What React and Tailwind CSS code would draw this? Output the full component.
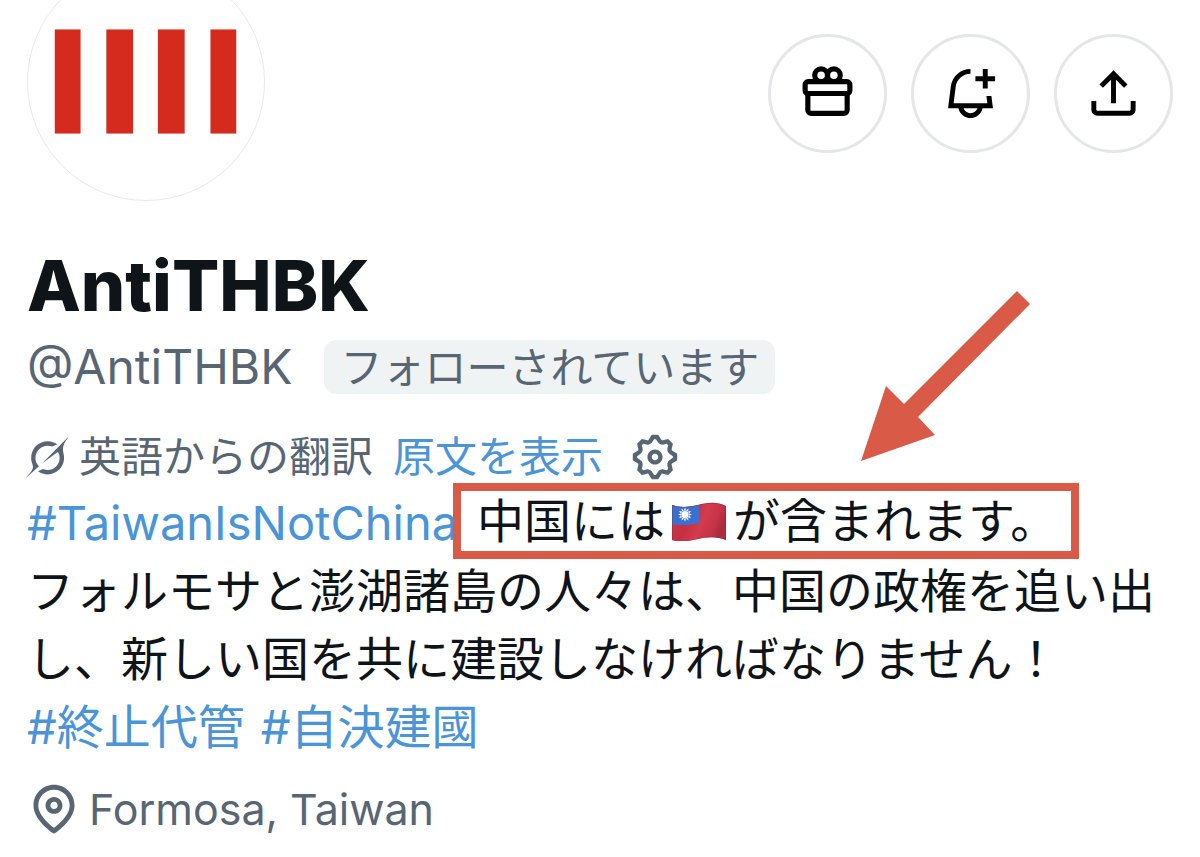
import React from 'react'

const actions = [
  { label: 'ギフト', Icon: GiftIcon },
  { label: '通知', Icon: BellPlusIcon },
  { label: '共有', Icon: ShareIcon },
]

function GiftIcon() {
  return (
    <svg viewBox="0 0 24 24" className="size-[59px]" fill="none" stroke="currentColor" strokeWidth="2.1" aria-hidden="true">
      <circle cx="9.4" cy="4.6" r="2.6" />
      <circle cx="14.6" cy="4.6" r="2.6" />
      <rect x="2.9" y="7.2" width="18.2" height="4.8" rx="1.2" fill="white" />
      <path d="M4 12v6.7c0 .8.6 1.4 1.4 1.4h13.2c.8 0 1.4-.6 1.4-1.4V12" />
    </svg>
  )
}

function BellPlusIcon() {
  return (
    <svg viewBox="0 0 24 24" className="size-[59px]" fill="currentColor" aria-hidden="true">
      <path d="M22 5v2h-3v3h-2V7h-3V5h3V2h2v3h3zm-.86 13h-4.241c-.464 2.281-2.482 4-4.899 4s-4.435-1.719-4.899-4H2.87L4 9.05C4.51 5.02 7.93 2 12 2v2C8.94 4 6.36 6.27 5.98 9.3L5.13 16h13.73l-.38-3h2.02l.64 5zM14.829 18H9.171c.413 1.164 1.524 2 2.829 2s2.416-.836 2.829-2z" />
    </svg>
  )
}

function ShareIcon() {
  return (
    <svg viewBox="0 0 24 24" className="size-[59px]" fill="currentColor" aria-hidden="true">
      <path d="M12 2.59l5.7 5.7-1.41 1.42L13 6.41V16h-2V6.41l-3.3 3.3-1.41-1.42L12 2.59zM21 15l-.02 3.51c0 1.38-1.12 2.49-2.5 2.49H5.5C4.11 21 3 19.88 3 18.5V15h2v3.5c0 .28.22.5.5.5h12.98c.28 0 .5-.22.5-.5L19 15h2z" />
    </svg>
  )
}

function GrokIcon() {
  return (
    <svg viewBox="0 0 33 32" className="-ml-0.5 h-[43px] w-11 shrink-0" fill="currentColor" aria-hidden="true">
      <path d="M12.745 20.54l10.97-8.19c.539-.4 1.307-.244 1.564.38 1.349 3.288.746 7.241-1.938 9.955-2.683 2.714-6.417 3.31-9.83 1.954l-3.728 1.745c5.347 3.697 11.84 2.782 15.898-1.324 3.219-3.255 4.216-7.692 3.284-11.693l.008.009c-1.351-5.878.332-8.227 3.782-13.031L33 0l-4.54 4.59v-.014L12.743 20.544m-2.263 1.987c-3.837-3.707-3.175-9.446.1-12.755 2.42-2.449 6.388-3.448 9.852-1.979l3.72-1.737c-.67-.49-1.53-1.017-2.515-1.387-4.455-1.854-9.789-.931-13.41 2.728-3.483 3.523-4.579 8.94-2.697 13.561 1.405 3.454-.899 5.898-3.22 8.364C1.49 30.2.666 31.074 0 32l10.478-9.466" />
    </svg>
  )
}

function GearIcon() {
  return (
    <svg viewBox="0 0 24 24" className="size-[52px]" fill="currentColor" aria-hidden="true">
      <path d="M10.54 1.75h2.92l1.57 2.36c.11.17.32.25.53.21l2.53-.59 2.17 2.17-.58 2.54c-.05.2.04.41.21.53l2.36 1.57v2.92l-2.36 1.57c-.17.12-.26.33-.21.53l.58 2.54-2.17 2.17-2.53-.59c-.21-.04-.42.04-.53.21l-1.57 2.36h-2.92l-1.58-2.36c-.11-.17-.32-.25-.52-.21l-2.54.59-2.17-2.17.58-2.54c.05-.2-.03-.41-.21-.53l-2.35-1.57v-2.92L4.1 8.97c.18-.12.26-.33.21-.53L3.73 5.9 5.9 3.73l2.54.59c.2.04.41-.04.52-.21l1.58-2.36zm1.07 2l-.98 1.47C10.05 6.08 9 6.5 7.99 6.27l-1.46-.34-.6.6.33 1.46c.24 1.01-.18 2.07-1.05 2.64l-1.46.98v.78l1.46.98c.87.57 1.29 1.63 1.05 2.64l-.33 1.46.6.6 1.46-.34c1.01-.23 2.06.19 2.64 1.05l.98 1.47h.78l.97-1.47c.58-.86 1.63-1.28 2.65-1.05l1.45.34.61-.6-.34-1.46c-.23-1.01.18-2.07 1.05-2.64l1.47-.98v-.78l-1.47-.98c-.87-.57-1.28-1.63-1.05-2.64l.34-1.46-.61-.6-1.45.34c-1.02.23-2.07-.19-2.65-1.05l-.97-1.47h-.78zM12 10.5c-.83 0-1.5.67-1.5 1.5s.67 1.5 1.5 1.5c.82 0 1.5-.67 1.5-1.5s-.68-1.5-1.5-1.5zM8.5 12c0-1.93 1.56-3.5 3.5-3.5 1.93 0 3.5 1.57 3.5 3.5s-1.57 3.5-3.5 3.5c-1.94 0-3.5-1.57-3.5-3.5z" />
    </svg>
  )
}

function PinIcon() {
  return (
    <svg viewBox="0 0 24 24" className="-ml-0.5 size-[58px] shrink-0" fill="currentColor" aria-hidden="true">
      <path d="M12 7c-1.93 0-3.5 1.57-3.5 3.5S10.07 14 12 14s3.5-1.57 3.5-3.5S13.93 7 12 7zm0 5c-.827 0-1.5-.673-1.5-1.5S11.173 9 12 9s1.5.673 1.5 1.5S12.827 12 12 12zm0-10c-4.687 0-8.5 3.813-8.5 8.5 0 5.967 7.621 11.116 7.945 11.332l.555.37.555-.37c.324-.216 7.945-5.365 7.945-11.332C20.5 5.813 16.687 2 12 2zm0 17.77c-1.665-1.241-6.5-5.196-6.5-9.27C5.5 6.916 8.416 4 12 4s6.5 2.916 6.5 6.5c0 4.073-4.835 8.028-6.5 9.27z" />
    </svg>
  )
}

function Avatar() {
  return (
    <svg viewBox="0 0 238 238" className="-mt-[37px] size-[238px] shrink-0 rounded-full border border-[#e8eaeb] bg-white" role="img" aria-label="AntiTHBK">
      <g fill="#d52b1e">
        <rect x="27" y="66" width="26" height="105" />
        <rect x="79" y="66" width="27" height="105" />
        <rect x="131" y="66" width="27" height="105" />
        <rect x="184" y="66" width="26" height="105" />
      </g>
    </svg>
  )
}

const sunRays = [0, 30, 60, 90, 120, 150, 180, 210, 240, 270, 300, 330]

function Flag() {
  return (
    <svg viewBox="0 0 56 40" className="mx-1.5 h-10 w-14" role="img" aria-label="台湾の旗">
      <defs>
        <linearGradient id="cloth" x1="0" x2="1" y1="0" y2="0.3">
          <stop offset="0" stopColor="#cb3e50" />
          <stop offset="0.4" stopColor="#c62f43" />
          <stop offset="0.65" stopColor="#d23c4e" />
          <stop offset="0.88" stopColor="#c63247" />
          <stop offset="1" stopColor="#ab2e40" />
        </linearGradient>
        <clipPath id="wave">
          <path d="M1 4c8 3 18 2 26 0s18-4 28 1v34c-10-4-19-3-28-1s-17 4-26 1z" />
        </clipPath>
      </defs>
      <g clipPath="url(#wave)">
        <rect width="56" height="40" fill="url(#cloth)" />
        <path d="M0 0h28v22c-9 2-18 3-28 1z" fill="#3a70d0" />
        <g fill="white">
          {sunRays.map((deg) => (
            <path key={deg} d="M12.9 9.5L14 6.5l1.1 3z" transform={`rotate(${deg} 14 13.5)`} />
          ))}
          <circle cx="14" cy="13.5" r="3.6" />
        </g>
        <path d="M1 4c8 3 18 2 26 0s18-4 28 1v34c-10-4-19-3-28-1s-17 4-26 1z" fill="none" stroke="#7c2236" strokeOpacity="0.6" />
      </g>
    </svg>
  )
}

function Arrow() {
  return (
    <svg viewBox="0 0 170 170" className="pointer-events-none absolute right-[40px] bottom-[90px] size-[170px]" fill="#d95a46" aria-hidden="true">
      <path d="M156 0L169 13 57 126 74 144 0 170 25 95 43 113z" />
    </svg>
  )
}

const App = () => {
  return (
    <main lang="ja" className="min-h-screen overflow-hidden bg-white px-[27px] font-['Inter','Noto_Sans_CJK_JP',sans-serif] text-[#0f1419]">
      <header className="flex items-start justify-between">
        <Avatar />
        <div className="mt-[34px] flex gap-6">
          {actions.map(({ label, Icon }) => (
            <button
              key={label}
              type="button"
              aria-label={label}
              className="flex size-[119px] items-center justify-center rounded-full border-[3px] border-[#e5e6e7] text-black"
            >
              <Icon />
            </button>
          ))}
        </div>
      </header>

      <h1 className="mt-[45px] text-[70px] leading-[80px] font-extrabold">AntiTHBK</h1>

      <div className="flex h-[82px] items-center gap-8 text-[#586673]">
        <span className="text-[48px] leading-[54px]">@AntiTHBK</span>
        <span className="rounded-xl bg-[#eff3f4] px-4 pt-0.5 text-[42px] leading-[52px] whitespace-nowrap">フォローされています</span>
      </div>

      {/* Translation notice */}
      <div className="mt-[17px] flex h-[64px] items-center text-[42px] leading-[64px] text-[#586673]">
        <GrokIcon />
        <span className="ml-2.5">英語からの翻訳</span>
        <a href="#original" className="ml-5 text-[#4a94d8]">原文を表示</a>
        <button type="button" aria-label="翻訳の設定" className="ml-[26px]">
          <GearIcon />
        </button>
      </div>

      {/* Bio */}
      <div className="text-[47px] leading-[68px]">
        <div className="relative flex h-[68px] whitespace-nowrap">
          <a href="#taiwan" className="w-[426px] text-[#4a94d8]">#TaiwanIsNotChina</a>
          <div className="relative -mt-[6px] flex h-[76px] items-center border-8 border-[#d95a46] bg-white pr-3.5 pl-4">
            中国には
            <Flag />
            が含まれます。
            <Arrow />
          </div>
        </div>
        <p>フォルモサと澎湖諸島の人々は、中国の政権を追い出し、新しい国を共に建設しなければなりません！</p>
        <p className="flex gap-4 text-[#4a94d8]">
          <a href="#end">#終止代管</a>
          <a href="#found">#自決建國</a>
        </p>
      </div>

      <div className="mt-4 flex items-center gap-1.5 text-[43px] leading-[64px] text-[#586673]">
        <PinIcon />
        <span>Formosa, Taiwan</span>
      </div>
    </main>
  )
}

export default App
